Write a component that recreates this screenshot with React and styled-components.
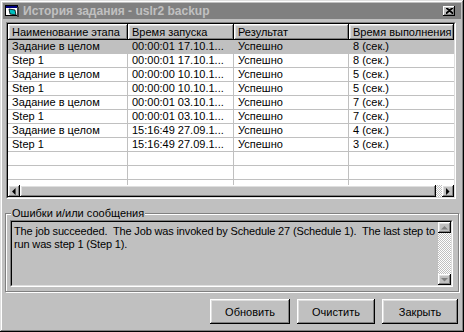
import React from 'react';
import styled, { createGlobalStyle } from 'styled-components';

const GlobalStyle = createGlobalStyle`
    html, body {
        margin: 0;
        padding: 0;
        background: #c0c0c0;
    }
    body {
        font-family: "Liberation Sans", Arial, sans-serif;
        font-size: 11px;
        color: #000;
    }
`;

const raised = `
    box-shadow: inset -1px -1px #000, inset 1px 1px #fff, inset -2px -2px #808080, inset 2px 2px #dfdfdf;
`;

const Window = styled.div`
    width: 464px;
    height: 332px;
    box-sizing: border-box;
    padding: 3px;
    background: #c0c0c0;
    display: flex;
    flex-direction: column;
    box-shadow: inset -1px -1px #000, inset 1px 1px #dfdfdf, inset -2px -2px #808080, inset 2px 2px #fff;
`;

const TitleBar = styled.div`
    height: 16px;
    background: #808080;
    display: flex;
    align-items: center;
    padding: 0 6px 0 2px;
    gap: 4px;
`;

const Title = styled.span`
    flex: 1;
    color: #c0c0c0;
    font-weight: bold;
    font-size: 12px;
    white-space: nowrap;
`;

const CloseButton = styled.div`
    width: 12px;
    height: 10px;
    background: #c0c0c0;
    display: flex;
    align-items: center;
    justify-content: center;
    box-shadow: inset -1px -1px #000, inset 1px 1px #fff, inset -2px -2px #808080;
`;

const SunkenOuter = styled.div`
    border: 1px solid;
    border-color: #808080 #fff #fff #808080;
    margin: ${p => p.$margin || '0'};
`;

const SunkenInner = styled.div`
    border: 1px solid;
    border-color: #000 #dfdfdf #dfdfdf #000;
    background: ${p => p.$bg || '#fff'};
    display: flex;
    flex-direction: ${p => p.$dir || 'column'};
    height: ${p => p.$height}px;
    overflow: hidden;
`;

const HeaderRow = styled.div`
    display: flex;
    height: 16px;
    flex-shrink: 0;
    background: #c0c0c0;
`;

const HeaderCell = styled.div`
    width: ${p => p.$w ? `${p.$w}px` : 'auto'};
    flex: ${p => p.$w ? '0 0 auto' : '1'};
    box-sizing: border-box;
    padding: 0 4px;
    line-height: 16px;
    white-space: nowrap;
    overflow: hidden;
    ${raised}
`;

const Body = styled.div`
    flex: 1;
    overflow: hidden;
    background: #fff;
`;

const Row = styled.div`
    display: flex;
    height: 14px;
    background: ${p => p.$selected ? '#c0c0c0' : '#fff'};
`;

const Cell = styled.div`
    width: ${p => p.$w ? `${p.$w}px` : 'auto'};
    flex: ${p => p.$w ? '0 0 auto' : '1'};
    box-sizing: border-box;
    padding: 0 4px;
    line-height: 13px;
    border-right: ${p => p.$w ? '1px solid #c0c0c0' : 'none'};
    border-bottom: 1px solid #c0c0c0;
    white-space: nowrap;
    overflow: hidden;
`;

const HScroll = styled.div`
    display: flex;
    height: 12px;
    flex-shrink: 0;
`;

const VScroll = styled.div`
    display: flex;
    flex-direction: column;
    width: 13px;
    flex-shrink: 0;
`;

const ArrowButton = styled.div`
    width: ${p => p.$w}px;
    height: ${p => p.$h}px;
    flex-shrink: 0;
    background: #c0c0c0;
    display: flex;
    align-items: center;
    justify-content: center;
    ${raised}
`;

const Thumb = styled.div`
    flex: 1;
    background: #c0c0c0;
    ${raised}
`;

const Track = styled.div`
    flex: ${p => p.$size ? `0 0 ${p.$size}px` : '1'};
    background: repeating-conic-gradient(#c0c0c0 0 25%, #fff 0 50%) 0 0 / 2px 2px;
`;

const GroupBox = styled.div`
    position: relative;
    margin: 14px 2px 0 2px;
    border: 1px solid #808080;
    box-shadow: inset 1px 1px #fff, 1px 1px #fff;
    padding: 6px 5px 4px 4px;
`;

const GroupLabel = styled.span`
    position: absolute;
    top: -7px;
    left: 5px;
    padding: 0 1px;
    background: #c0c0c0;
    line-height: 13px;
`;

const Message = styled.div`
    flex: 1;
    padding: 3px 1px 3px 2px;
    line-height: 13px;
    letter-spacing: -0.15px;
    white-space: pre;
    overflow: hidden;
`;

const ButtonRow = styled.div`
    display: flex;
    justify-content: flex-end;
    gap: 7px;
    margin-top: 7px;
    padding-right: 3px;
`;

const Button = styled.button`
    width: ${p => p.$w}px;
    height: 25px;
    border: none;
    background: #c0c0c0;
    font-family: inherit;
    font-size: 11px;
    color: #000;
    padding: 0;
    ${raised}
`;

const columns = [
    { title: 'Наименование этапа', w: 120 },
    { title: 'Время запуска', w: 106 },
    { title: 'Результат', w: 115 },
    { title: 'Время выполнения' },
];

const rows = [
    ['Задание в целом', '00:00:01 17.10.1...', 'Успешно', '8 (сек.)'],
    ['Step 1', '00:00:01 17.10.1...', 'Успешно', '8 (сек.)'],
    ['Задание в целом', '00:00:00 10.10.1...', 'Успешно', '5 (сек.)'],
    ['Step 1', '00:00:00 10.10.1...', 'Успешно', '5 (сек.)'],
    ['Задание в целом', '00:00:01 03.10.1...', 'Успешно', '7 (сек.)'],
    ['Step 1', '00:00:01 03.10.1...', 'Успешно', '7 (сек.)'],
    ['Задание в целом', '15:16:49 27.09.1...', 'Успешно', '4 (сек.)'],
    ['Step 1', '15:16:49 27.09.1...', 'Успешно', '3 (сек.)'],
    ['', '', '', ''],
    ['', '', '', ''],
    ['', '', '', ''],
];

const Arrow = ({ dir, color = '#000' }) => {
    const pts = {
        left: '4,0 0,4 4,8',
        right: '0,0 4,4 0,8',
        up: '0,4 4,0 8,4',
        down: '0,0 4,4 8,0',
    }[dir];
    const vertical = dir === 'up' || dir === 'down';
    return (
        <svg width={vertical ? 7 : 4} height={vertical ? 4 : 7} viewBox={vertical ? '0 0 8 4.5' : '0 0 4.5 8'}>
            <polygon points={pts} fill={color} />
        </svg>
    );
};

const AppIcon = () => (
    <svg width="14" height="12" viewBox="0 0 14 12">
        <rect x="0.5" y="0.5" width="12" height="10" fill="#fff" stroke="#000" />
        <rect x="1" y="1" width="11" height="2" fill="#000080" />
        <polygon points="4,4 10,5 11,10 5,9" fill="#00c0c0" stroke="#000" strokeWidth="0.8" />
        <rect x="12" y="2" width="2" height="10" fill="#404040" />
    </svg>
);

function App() {
    return (
        <>
            <GlobalStyle />
            <Window>
                <TitleBar>
                    <AppIcon />
                    <Title>История задания - uslr2 backup</Title>
                    <CloseButton>
                        <svg width="7" height="6" viewBox="0 0 7 6">
                            <path d="M0 0 L7 6 M7 0 L0 6 M1 0 L8 6 M6 0 L-1 6" stroke="#000" strokeWidth="1.2" />
                        </svg>
                    </CloseButton>
                </TitleBar>

                <SunkenOuter $margin="3px 5px 0 3px">
                    <SunkenInner $height={173}>
                        <HeaderRow>
                            {columns.map(c => (
                                <HeaderCell key={c.title} $w={c.w}>{c.title}</HeaderCell>
                            ))}
                        </HeaderRow>
                        <Body>
                            {rows.map((r, i) => (
                                <Row key={i} $selected={i === 0}>
                                    {r.map((v, j) => (
                                        <Cell key={j} $w={columns[j].w}>{v}</Cell>
                                    ))}
                                </Row>
                            ))}
                        </Body>
                        <HScroll>
                            <ArrowButton $w={12} $h={12}><Arrow dir="left" /></ArrowButton>
                            <Thumb />
                            <Track $size={6} />
                            <ArrowButton $w={12} $h={12}><Arrow dir="right" /></ArrowButton>
                        </HScroll>
                    </SunkenInner>
                </SunkenOuter>

                <GroupBox>
                    <GroupLabel>Ошибки и/или сообщения</GroupLabel>
                    <SunkenOuter>
                        <SunkenInner $height={63} $dir="row" $bg="#c0c0c0">
                            <Message>
                                {'The job succeeded.  The Job was invoked by Schedule 27 (Schedule 1).  The last step to\nrun was step 1 (Step 1).'}
                            </Message>
                            <VScroll>
                                <ArrowButton $w={13} $h={11}><Arrow dir="up" color="#808080" /></ArrowButton>
                                <Track />
                                <ArrowButton $w={13} $h={11}><Arrow dir="down" color="#808080" /></ArrowButton>
                            </VScroll>
                        </SunkenInner>
                    </SunkenOuter>
                </GroupBox>

                <ButtonRow>
                    <Button $w={80}>Обновить</Button>
                    <Button $w={78}>Очистить</Button>
                    <Button $w={76}>Закрыть</Button>
                </ButtonRow>
            </Window>
        </>
    );
}

export default App;
